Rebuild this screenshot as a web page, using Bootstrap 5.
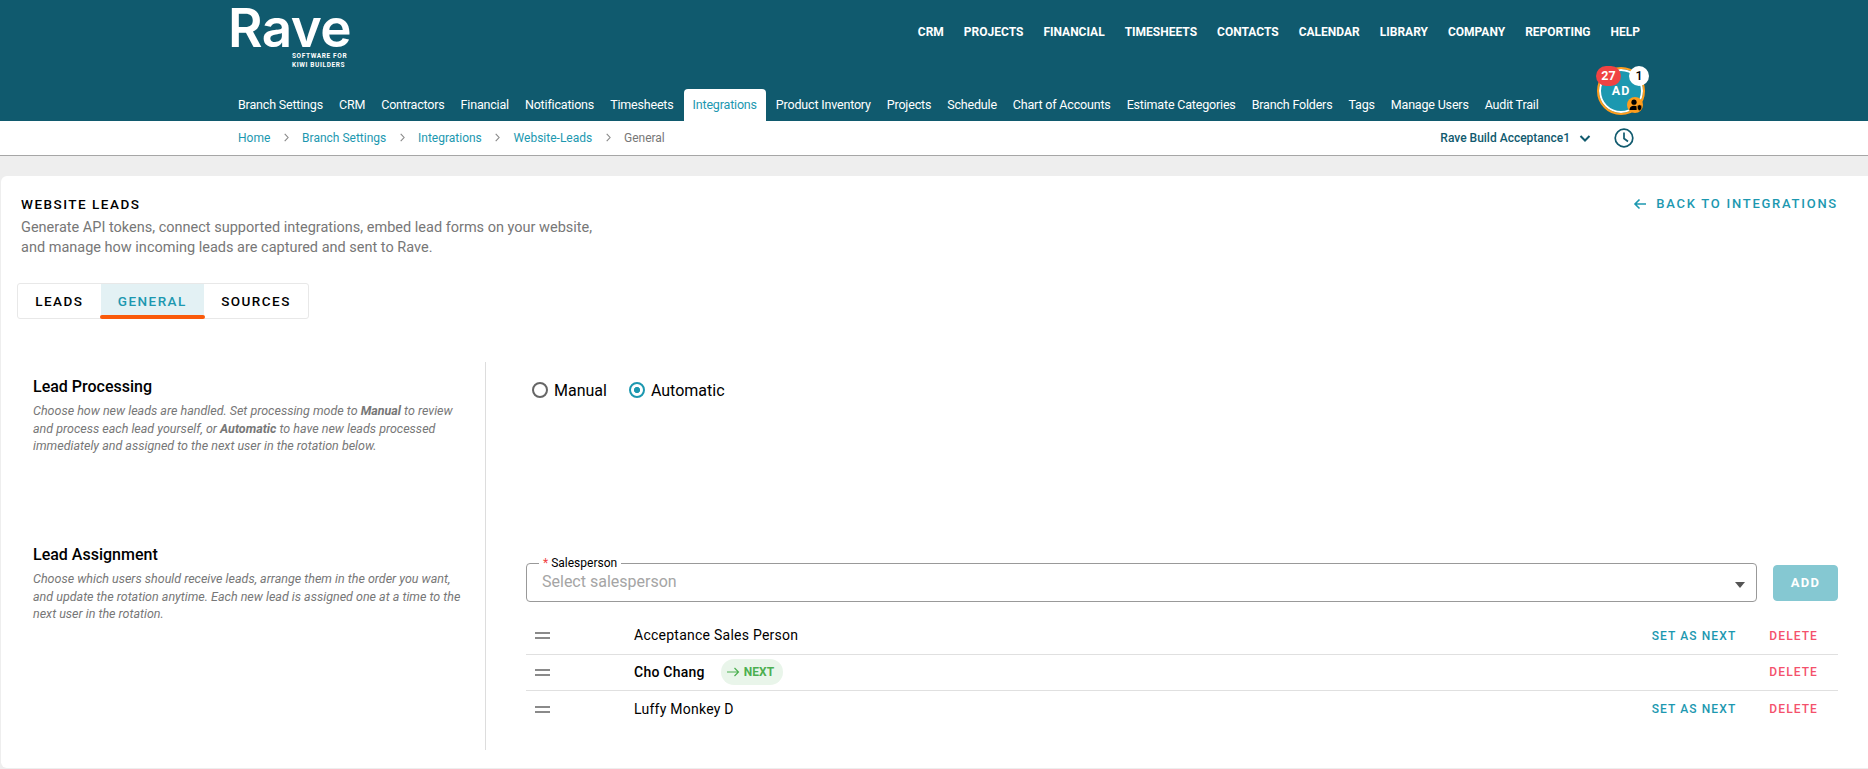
<!DOCTYPE html>
<html lang="en">
<head>
    <meta charset="UTF-8">
    <meta name="viewport" content="width=device-width, initial-scale=1.0">
    <title>Website Leads</title>

    <link href="https://cdn.jsdelivr.net/npm/bootstrap@5.3.0/dist/css/bootstrap.min.css" rel="stylesheet">

    <style>
        html, body { height: 100%; }
        body { font-family: Roboto, "Liberation Sans", sans-serif; background: #eeeeee; color: #000; overflow: hidden; }

        /* header */
        .rv-header { background: #105a6e; height: 121px; padding: 0 228px 0 230px; }
        .rv-toprow { height: 67px; }
        .rv-subrow { height: 54px; }
        .rv-logo { color: #fff; width: 124px; margin-left: -2px; }
        .rv-logo-word { font-family: Inter, sans-serif; font-weight: 600; font-size: 53px; line-height: 56px; height: 52px; letter-spacing: -.6px; }
        .rv-logo-tag { font-size: 6.5px; font-weight: 700; line-height: 8.5px; letter-spacing: .62px; margin: 0 0 0 64px; white-space: nowrap; }
        .rv-topnav { gap: 20px; padding-top: 24px; }
        .rv-topnav a { color: #fff; font-size: 12px; font-weight: 700; line-height: 16px; text-decoration: none; }
        .rv-subnav { height: 32px; }
        .rv-subnav a { display: block; color: #fff; font-size: 12.5px; letter-spacing: -.18px; line-height: 32px; padding: 0 8px; height: 32px; text-decoration: none; white-space: nowrap; }
        .rv-subnav a.active { background: #fff; color: #1c98b0; border-radius: 4px 4px 0 0; padding: 0 9px; margin: 0 2px; }

        /* avatar */
        .rv-avatar { position: relative; width: 48px; height: 48px; margin: 0 -5px 6px 0; border-radius: 50%; background: #1c98b0; border: 2px solid #ff9d1c; box-shadow: inset 0 0 0 2px #fff; color: #fff; font-size: 12.5px; font-weight: 700; letter-spacing: 1px; display: flex; align-items: center; justify-content: center; }
        .rv-count { position: absolute; top: -3px; height: 20px; border-radius: 10px; font-size: 12.5px; font-weight: 700; line-height: 20px; text-align: center; letter-spacing: 0; }
        .rv-count-red { left: -3px; width: 25px; background: #f04343; color: #fff; }
        .rv-count-white { right: -6px; width: 20px; background: #fff; color: #000; font-weight: 500; }
        .rv-role { position: absolute; right: 0; bottom: 0; width: 16px; height: 16px; border-radius: 50%; background: #ff9d1c; display: flex; align-items: center; justify-content: center; }

        /* breadcrumb bar */
        .rv-crumbbar { background: #fff; height: 35px; border-bottom: 1px solid #a6a6a6; padding: 0 234px 0 238px; }
        .rv-crumbbar .breadcrumb { --bs-breadcrumb-margin-bottom: 0; --bs-breadcrumb-item-padding-x: 13.4px; --bs-breadcrumb-item-active-color: #777; --bs-breadcrumb-divider: url("data:image/svg+xml,%3Csvg xmlns='http://www.w3.org/2000/svg' width='5' height='9'%3E%3Cpath d='M.7.8l3.4 3.7L.7 8.2' fill='none' stroke='%23888' stroke-width='1.1'/%3E%3C/svg%3E"); font-size: 12px; }
        .rv-crumbbar .breadcrumb a { color: #1c98b0; text-decoration: none; }
        .rv-branch { color: #105a6e; font-size: 12px; font-weight: 500; }

        /* card */
        .rv-panel { background: #fff; margin: 20px 0 0 1px; height: 592px; border-radius: 6px 0 0 6px; padding: 20px 30px 0 20px; }
        .rv-title { font-size: 13.5px; font-weight: 500; letter-spacing: 1.5px; line-height: 16px; }
        .rv-intro { color: #777; font-size: 14.5px; line-height: 20px; margin-top: 6px; }
        .rv-back { color: #1c98b0; font-size: 13px; font-weight: 500; letter-spacing: 1.75px; text-decoration: none; line-height: 16px; gap: 9px; }

        .rv-tabs { width: 292px; height: 36px; margin: 25px 0 0 -4px; border: 1px solid #e8e8e8; border-radius: 3px; position: relative; }
        .rv-tabs a { display: block; height: 34px; line-height: 34px; text-align: center; font-size: 13.5px; font-weight: 500; letter-spacing: 1.45px; color: #000; text-decoration: none; }
        .rv-tabs a.active { color: #1c98b0; background: #e3f1f4; position: relative; }
        .rv-tabs a.active::after { content: ""; position: absolute; left: -1px; right: -1px; bottom: -1px; height: 4px; background: #fa5a0a; border-radius: 2px; }

        .rv-body { margin: 43px 0 0 -20px; height: 388px; }
        .rv-left { width: 485px; height: 388px; padding-left: 32px; padding-right: 24px; border-right: 1px solid #ddd; }
        .rv-block { height: 168px; padding-top: 15px; }
        .rv-block-title { font-size: 16px; font-weight: 500; line-height: 19px; margin-bottom: 6px; }
        .rv-note { color: #777; font-size: 12.5px; font-style: italic; line-height: 17.5px; margin: 0; }
        .rv-right { padding: 0 0 0 40px; }

        .rv-radio { margin: 17px 0 0 6px; height: 25px; gap: 22px; font-size: 16px; }
        .rv-radio .form-check { padding: 0; margin: 0; min-height: 0; }
        .rv-radio .form-check-input { float: none; margin: 0 6px 0 0; width: 16px; height: 16px; border: 2px solid #666; vertical-align: -2px; background-image: none; }
        .rv-radio .form-check-input:checked { background: radial-gradient(circle, #1c98b0 0 2.8px, #fff 3.3px); border-color: #1c98b0; }

        .rv-picker { margin-top: 152px; }
        .rv-field { margin: 0; border: 1px solid #999; border-radius: 4px; height: 46px; padding: 0 15px; position: relative; min-width: 0; }
        .rv-field legend { float: none; width: auto; margin: 0 0 0 -3px; padding: 0 4px; font-size: 12px; line-height: 14px; color: #000; height: 14px; }
        .rv-field legend span { color: #f04343; }
        .rv-field-value { color: #a5a5a5; font-size: 16px; line-height: 20px; margin-top: 2px; }
        .rv-caret { position: absolute; right: 11px; top: 12px; width: 0; height: 0; border: 5px solid transparent; border-top: 6px solid #555; border-bottom: 0; }
        .rv-add { --bs-btn-disabled-bg: #85c8d2; --bs-btn-disabled-border-color: #85c8d2; --bs-btn-disabled-color: #fff; --bs-btn-disabled-opacity: 1; width: 65px; height: 36px; margin: 9px 0 0 16px; padding: 0; font-size: 13px; font-weight: 700; letter-spacing: 1.3px; border-radius: 4px; flex: none; }

        .rv-rows { margin-top: 16px; }
        .rv-rowitem { height: 36.5px; padding: 0 20px 0 9px; border-bottom: 1px solid #e0e0e0; font-size: 14px; letter-spacing: .25px; }
        .rv-rowitem:last-child { border-bottom: 0; }
        .rv-handle { width: 15px; height: 7px; border-top: 2px solid #8a8a8a; border-bottom: 2px solid #8a8a8a; flex: none; margin-right: 84px; }
        .rv-next { background: #e9f5ea; color: #4caf50; border-radius: 13px; height: 26px; padding: 0 9px 0 5px; margin-left: 16px; font-size: 12px; font-weight: 700; gap: 4px; letter-spacing: 0; }
        .rv-act { font-size: 12px; font-weight: 500; letter-spacing: 1.1px; text-decoration: none; }
        .rv-act-next { color: #1c98b0; margin-right: 33px; }
        .rv-act-del { color: #f4516c; }
    </style>
</head>
<body>
    <header class="rv-header">
        <div class="rv-toprow d-flex justify-content-between align-items-start">
            <div class="rv-logo">
                <div class="rv-logo-word">Rave</div>
                <div class="rv-logo-tag">SOFTWARE FOR<br>KIWI BUILDERS</div>
            </div>
            <nav class="rv-topnav d-flex">
                <a href="#">CRM</a>
                <a href="#">PROJECTS</a>
                <a href="#">FINANCIAL</a>
                <a href="#">TIMESHEETS</a>
                <a href="#">CONTACTS</a>
                <a href="#">CALENDAR</a>
                <a href="#">LIBRARY</a>
                <a href="#">COMPANY</a>
                <a href="#">REPORTING</a>
                <a href="#">HELP</a>
            </nav>
        </div>
        <div class="rv-subrow d-flex justify-content-between align-items-end">
            <nav class="rv-subnav d-flex">
                <a href="#">Branch Settings</a>
                <a href="#">CRM</a>
                <a href="#">Contractors</a>
                <a href="#">Financial</a>
                <a href="#">Notifications</a>
                <a href="#">Timesheets</a>
                <a href="#" class="active">Integrations</a>
                <a href="#">Product Inventory</a>
                <a href="#">Projects</a>
                <a href="#">Schedule</a>
                <a href="#">Chart of Accounts</a>
                <a href="#">Estimate Categories</a>
                <a href="#">Branch Folders</a>
                <a href="#">Tags</a>
                <a href="#">Manage Users</a>
                <a href="#">Audit Trail</a>
            </nav>
            <div class="rv-avatar">
                AD
                <span class="rv-count rv-count-red">27</span>
                <span class="rv-count rv-count-white">1</span>
                <span class="rv-role">
                    <svg width="13" height="12" viewBox="0 0 13 12"><circle cx="5" cy="3.2" r="2.6" fill="#000"/><path d="M0.5 11c0-3 2-4.3 4.5-4.3 1 0 1.9.2 2.6.6V11z" fill="#000"/><path d="M8.3 6.5l2.2-.8 2.2.8v2.2c0 1.5-1 2.6-2.2 3-1.2-.4-2.2-1.5-2.2-3z" fill="#000" stroke="#ff9d1c" stroke-width=".6"/></svg>
                </span>
            </div>
        </div>
    </header>

    <div class="rv-crumbbar d-flex justify-content-between align-items-center">
        <ol class="breadcrumb">
            <li class="breadcrumb-item"><a href="#">Home</a></li>
            <li class="breadcrumb-item"><a href="#">Branch Settings</a></li>
            <li class="breadcrumb-item"><a href="#">Integrations</a></li>
            <li class="breadcrumb-item"><a href="#">Website-Leads</a></li>
            <li class="breadcrumb-item active">General</li>
        </ol>
        <div class="d-flex align-items-center">
            <span class="rv-branch">Rave Build Acceptance1</span>
            <svg class="ms-2" width="14" height="14" viewBox="0 0 14 14"><path d="M2.5 5l4.5 4.5L11.5 5" fill="none" stroke="#105a6e" stroke-width="2"/></svg>
            <svg style="margin-left:22px" width="20" height="20" viewBox="0 0 20 20"><circle cx="10" cy="10" r="8.8" fill="none" stroke="#105a6e" stroke-width="1.7"/><path d="M10 4.5V10.5L14 13.5" fill="none" stroke="#105a6e" stroke-width="1.7"/></svg>
        </div>
    </div>

    <main class="rv-panel">
        <div class="d-flex justify-content-between align-items-start">
            <div>
                <div class="rv-title">WEBSITE LEADS</div>
                <div class="rv-intro">Generate API tokens, connect supported integrations, embed lead forms on your website,<br>and manage how incoming leads are captured and sent to Rave.</div>
            </div>
            <a href="#" class="rv-back d-flex align-items-center">
                <svg width="14" height="12" viewBox="0 0 14 12"><path d="M13 6H2M6.5 1.5L2 6l4.5 4.5" fill="none" stroke="#1c98b0" stroke-width="1.6"/></svg>
                BACK TO INTEGRATIONS
            </a>
        </div>

        <div class="rv-tabs d-flex">
            <a href="#" class="flex-fill">LEADS</a>
            <a href="#" class="flex-fill active">GENERAL</a>
            <a href="#" class="flex-fill">SOURCES</a>
        </div>

        <div class="rv-body d-flex">
            <div class="rv-left flex-shrink-0">
                <div class="rv-block">
                    <div class="rv-block-title">Lead Processing</div>
                    <p class="rv-note">Choose how new leads are handled. Set processing mode to <b>Manual</b> to review and process each lead yourself, or <b>Automatic</b> to have new leads processed immediately and assigned to the next user in the rotation below.</p>
                </div>
                <div class="rv-block">
                    <div class="rv-block-title">Lead Assignment</div>
                    <p class="rv-note">Choose which users should receive leads, arrange them in the order you want, and update the rotation anytime. Each new lead is assigned one at a time to the next user in the rotation.</p>
                </div>
            </div>
            <div class="rv-right flex-grow-1">
                <div class="rv-radio d-flex">
                    <label class="form-check"><input class="form-check-input" type="radio" name="mode">Manual</label>
                    <label class="form-check"><input class="form-check-input" type="radio" name="mode" checked>Automatic</label>
                </div>
                <div class="rv-picker d-flex">
                    <fieldset class="rv-field flex-grow-1">
                        <legend><span>*</span> Salesperson</legend>
                        <div class="rv-field-value">Select salesperson</div>
                        <span class="rv-caret"></span>
                    </fieldset>
                    <button class="btn rv-add" disabled>ADD</button>
                </div>
                <div class="rv-rows">
                    <div class="rv-rowitem d-flex align-items-center">
                        <span class="rv-handle"></span>
                        <span>Acceptance Sales Person</span>
                        <a href="#" class="rv-act rv-act-next ms-auto">SET AS NEXT</a>
                        <a href="#" class="rv-act rv-act-del">DELETE</a>
                    </div>
                    <div class="rv-rowitem d-flex align-items-center">
                        <span class="rv-handle"></span>
                        <span class="fw-medium">Cho Chang</span>
                        <span class="rv-next d-flex align-items-center">
                            <svg width="14" height="10" viewBox="0 0 14 10"><path d="M1 5h11.5M8.5 1l4 4-4 4" fill="none" stroke="#4caf50" stroke-width="1.2"/></svg>
                            NEXT
                        </span>
                        <a href="#" class="rv-act rv-act-del ms-auto">DELETE</a>
                    </div>
                    <div class="rv-rowitem d-flex align-items-center">
                        <span class="rv-handle"></span>
                        <span>Luffy Monkey D</span>
                        <a href="#" class="rv-act rv-act-next ms-auto">SET AS NEXT</a>
                        <a href="#" class="rv-act rv-act-del">DELETE</a>
                    </div>
                </div>
            </div>
        </div>
    </main>

    <script src="https://cdn.jsdelivr.net/npm/bootstrap@5.3.0/dist/js/bootstrap.bundle.min.js"></script>
</body>
</html>
